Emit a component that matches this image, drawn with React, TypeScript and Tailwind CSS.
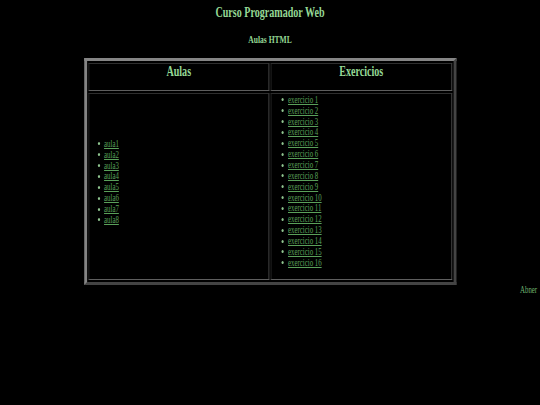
import React from "react";

const aulas = ["aula1", "aula2", "aula3", "aula4", "aula5", "aula6", "aula7", "aula8"];
const exercicios = Array.from({ length: 16 }, (_, i) => `exercicio ${i + 1}`);

function Item({ label, offset }: { label: string; offset: string }) {
  return (
    <li className="flex items-center h-[10.87px]">
      <span className={`${offset} w-[3px] h-[3px] rounded-full bg-[#8fc48f]`} />
      <a href="#" className="ml-[6px] text-[#5aa05a] underline">
        {label}
      </a>
    </li>
  );
}

export default function App() {
  const cell =
    "border border-t-[#2e2e2e] border-l-[#2e2e2e] border-r-[#5e5e5e] border-b-[#5e5e5e]";
  return (
    <div className="w-[540px] h-[405px] overflow-hidden bg-black">
      <div className="w-[750px] origin-top-left scale-x-[0.72] font-['Liberation_Serif',serif]">
        <div className="pt-[5px] text-center text-[14px] leading-[16px] font-bold text-[#95d895]">
          Curso Programador Web
        </div>
        <div className="mt-[13px] text-center text-[10.5px] leading-[12px] font-bold text-[#95d895]">
          Aulas HTML
        </div>
        <div className="mt-[12px] mx-auto w-[517px] border-y-[3px] border-x-[4px] border-t-[#858585] border-l-[#858585] border-r-[#444444] border-b-[#444444] p-[2px] grid grid-cols-2 gap-[2px]">
          <div className={`${cell} h-[28px] text-center text-[14px] leading-[16px] font-bold text-[#95d895]`}>
            Aulas
          </div>
          <div className={`${cell} h-[28px] text-center text-[14px] leading-[16px] font-bold text-[#95d895]`}>
            Exercicios
          </div>
          <div className={`${cell} h-[187px] pt-[44.5px] text-[9.5px]`}>
            <ul>
              {aulas.map((a) => (
                <Item key={a} label={a} offset="ml-[12px]" />
              ))}
            </ul>
          </div>
          <div className={`${cell} h-[187px] pt-[0.5px] text-[9.5px]`}>
            <ul>
              {exercicios.map((e) => (
                <Item key={e} label={e} offset="ml-[14px]" />
              ))}
            </ul>
          </div>
        </div>
        <div className="pr-[4px] text-right text-[9.5px] leading-[10.87px] text-[#6fb46f]">Abner</div>
      </div>
    </div>
  );
}
